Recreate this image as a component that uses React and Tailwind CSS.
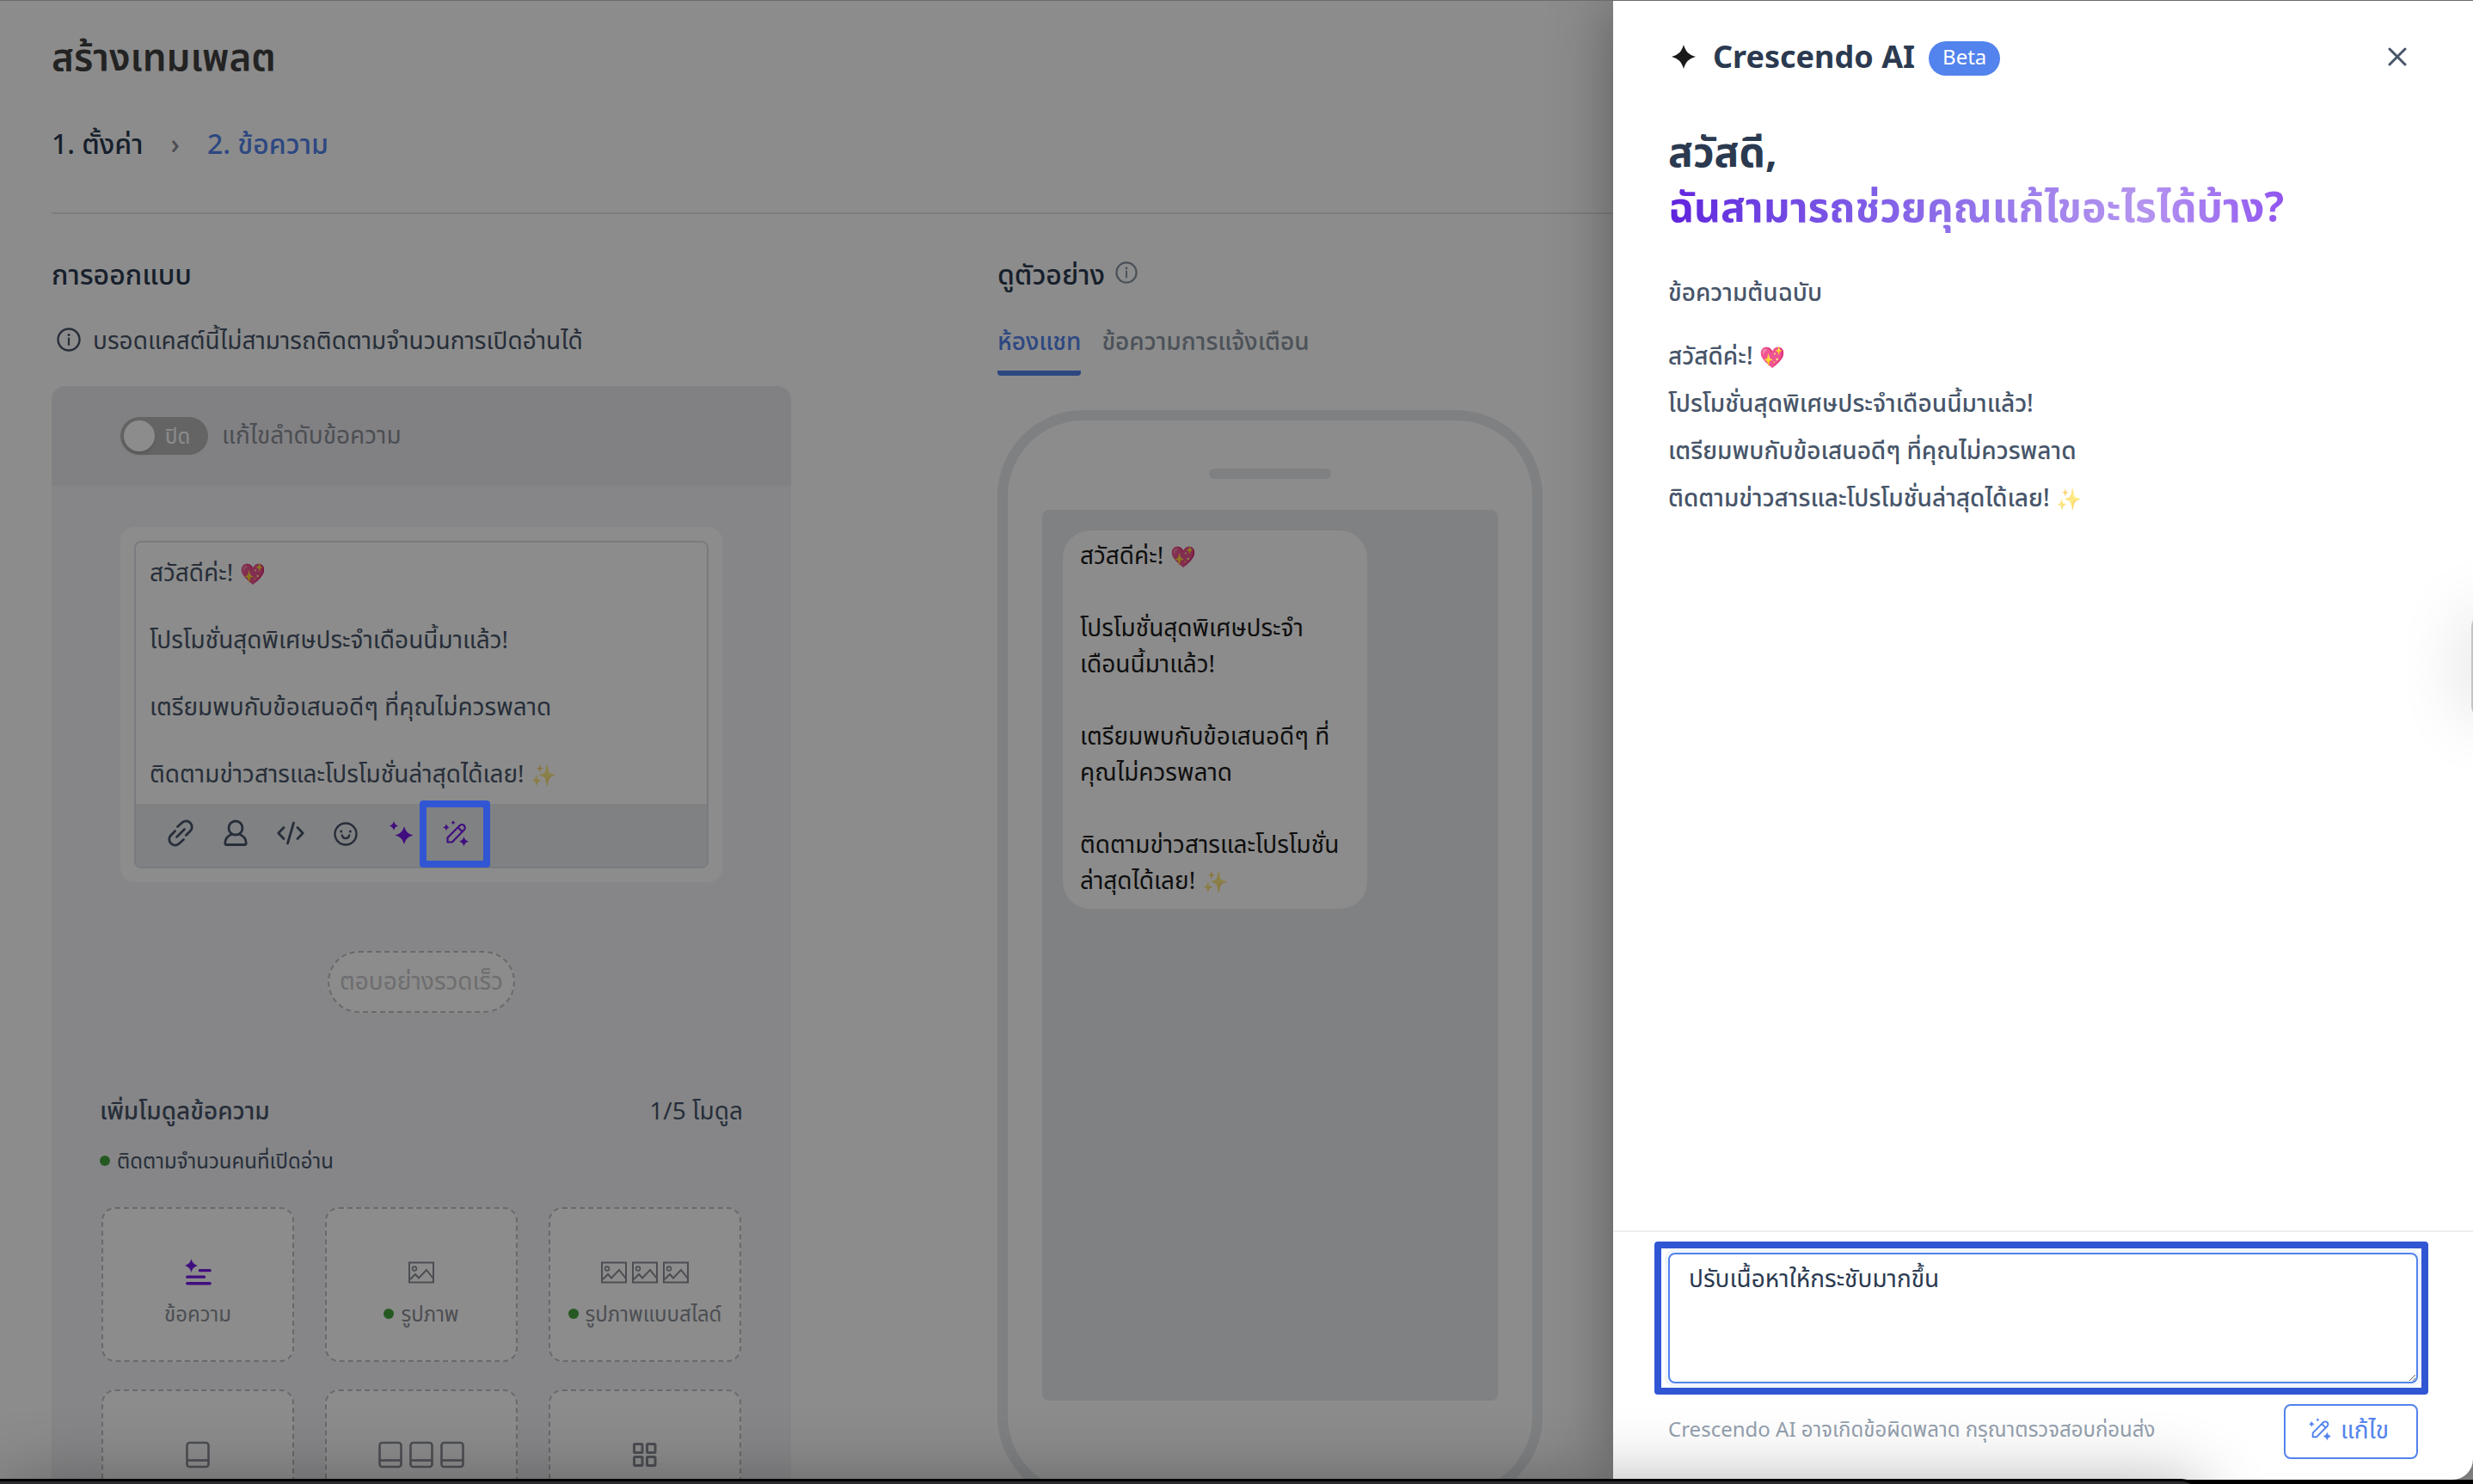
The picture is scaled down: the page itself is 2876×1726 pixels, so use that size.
import { X } from "lucide-react";

const paragraphs = [
  { text: "สวัสดีค่ะ!", emoji: "💖" },
  { text: "โปรโมชั่นสุดพิเศษประจำเดือนนี้มาแล้ว!" },
  { text: "เตรียมพบกับข้อเสนอดีๆ ที่คุณไม่ควรพลาด" },
  { text: "ติดตามข่าวสารและโปรโมชั่นล่าสุดได้เลย!", emoji: "✨", faded: true },
];

function Paragraph({ item, className }) {
  return (
    <p className={className}>
      {item.text}
      {item.emoji && (
        <>
          {" "}
          <span className={item.faded ? "text-2xl leading-none opacity-60" : "text-2xl leading-none"}>
            {item.emoji}
          </span>
        </>
      )}
    </p>
  );
}

function InfoIcon({ className }) {
  return (
    <svg viewBox="0 0 28 28" fill="none" stroke="currentColor" className={className}>
      <circle cx="14" cy="14" r="12.5" strokeWidth="2.4" />
      <path d="M14 12.5v7.5" strokeWidth="2.2" strokeLinecap="round" />
      <circle cx="14" cy="8.6" r="1.5" fill="currentColor" stroke="none" />
    </svg>
  );
}

function LinkIcon() {
  return (
    <svg viewBox="0 0 32 32" fill="none" stroke="currentColor" strokeWidth="2.8" strokeLinecap="round" className="size-8">
      <path d="M12.5 8.5 17.5 4a6.8 6.8 0 0 1 9.8 9.6l-5 5M19.5 23.5 14.5 28a6.8 6.8 0 0 1-9.8-9.6l5-5M11.5 20.5l9-9" />
    </svg>
  );
}

function PersonIcon() {
  return (
    <svg viewBox="0 0 32 32" fill="none" stroke="currentColor" strokeWidth="2.8" strokeLinejoin="round" className="size-8">
      <circle cx="16" cy="10" r="8" />
      <path d="M11.5 17.5c-4.5 1.5-7.5 5.2-7.7 10.3 0 1 .6 1.7 1.6 1.7h21.2c1 0 1.6-.7 1.6-1.7-.2-5.1-3.2-8.8-7.7-10.3" />
    </svg>
  );
}

function CodeIcon() {
  return (
    <svg viewBox="0 0 32 32" fill="none" stroke="currentColor" strokeWidth="2.8" strokeLinecap="round" strokeLinejoin="round" className="size-8">
      <path d="M8 9.5 1.8 16 8 22.5M24 9.5l6.2 6.5-6.2 6.5M19.5 4l-7 24" />
    </svg>
  );
}

function SmileIcon() {
  return (
    <svg viewBox="0 0 32 32" fill="none" stroke="currentColor" strokeWidth="2.4" strokeLinecap="round" className="size-8">
      <circle cx="16" cy="17" r="12.5" />
      <path d="M11.8 18.5c.6 2.5 2.2 3.6 4.2 3.6s3.6-1.1 4.2-3.6" />
      <circle cx="10.7" cy="14" r="1.5" fill="currentColor" stroke="none" />
      <circle cx="21.3" cy="14" r="1.5" fill="currentColor" stroke="none" />
    </svg>
  );
}

function SparkleIcon() {
  return (
    <svg viewBox="0 0 32 32" fill="currentColor" className="size-8">
      <path d="M20 8c1.8 6 4.3 8.6 10.5 10.5C24.3 20.4 21.8 23 20 29c-1.8-6-4.3-8.6-10.5-10.5C15.7 16.6 18.2 14 20 8Z" />
      <path d="M8 2c.8 3.2 2 4.6 5.2 5.5C10 8.4 8.8 9.8 8 13c-.8-3.2-2-4.6-5.2-5.5C6 6.6 7.2 5.2 8 2Z" />
    </svg>
  );
}

function MagicPenIcon({ className }) {
  return (
    <svg viewBox="0 0 32 32" fill="currentColor" className={className}>
      <path
        d="M6.5 26.5v-5.2L20.5 7.2a3.6 3.6 0 0 1 5.2 5.1L11.8 26.5ZM18.5 9.2l5.2 5.2"
        fill="none"
        stroke="currentColor"
        strokeWidth="2.2"
        strokeLinejoin="round"
      />
      <path d="M25.5 20c1 3.4 2.2 4.6 5.5 5.7-3.3 1-4.5 2.3-5.5 5.7-1-3.4-2.2-4.7-5.5-5.7 3.3-1.1 4.5-2.3 5.5-5.7Z" />
      <path d="M5 5.3c.7 2.4 1.6 3.3 4 4-2.4.7-3.3 1.6-4 4-.7-2.4-1.6-3.3-4-4 2.4-.7 3.3-1.6 4-4Z" />
      <path d="M13 1c.5 1.7 1.1 2.3 2.7 2.8-1.6.5-2.2 1.1-2.7 2.8-.5-1.7-1.1-2.3-2.7-2.8 1.6-.5 2.2-1.1 2.7-2.8Z" />
    </svg>
  );
}

function TextModuleIcon() {
  return (
    <svg viewBox="0 0 34 34" className="size-8 text-[#7519e6]" fill="currentColor">
      <path d="M9 0c1.4 5 3.3 7 8.2 8.5C12.3 10 10.4 12 9 17c-1.4-5-3.3-7-8.2-8.5C5.7 7 7.6 5 9 0Z" />
      <path d="M19.5 14.5H32M4 22.5h21M4 30.5h28" stroke="currentColor" strokeWidth="3.6" strokeLinecap="round" />
    </svg>
  );
}

function ImageIcon() {
  return (
    <svg viewBox="0 0 30 26" fill="none" stroke="currentColor" strokeWidth="2" className="h-[26px] w-[30px]">
      <rect x="1" y="1.5" width="28" height="23" />
      <circle cx="7" cy="8.5" r="2.4" strokeWidth="1.6" />
      <path d="m2 21 6-6 4 4.5 9-9.5 7.5 9.5" />
    </svg>
  );
}

function CardIcon() {
  return (
    <svg viewBox="0 0 28 32" fill="none" stroke="currentColor" strokeWidth="2.6" className="h-8 w-7">
      <rect x="1.5" y="2" width="25" height="28" rx="3" />
      <path d="M1.5 22.5h25" />
    </svg>
  );
}

function GridIcon() {
  return (
    <svg viewBox="0 0 30 30" fill="none" stroke="currentColor" strokeWidth="3" className="size-[30px]">
      <rect x="2.5" y="2.5" width="9.5" height="10" rx="1" />
      <rect x="17.5" y="2.5" width="9.5" height="10" rx="1" />
      <rect x="2.5" y="17.5" width="9.5" height="10" rx="1" />
      <rect x="17.5" y="17.5" width="9.5" height="10" rx="1" />
    </svg>
  );
}

const modules = [
  { name: "ข้อความ", icons: [TextModuleIcon], tracked: false },
  { name: "รูปภาพ", icons: [ImageIcon], tracked: true },
  { name: "รูปภาพแบบสไลด์", icons: [ImageIcon, ImageIcon, ImageIcon], tracked: true },
  { name: "การ์ด", icons: [CardIcon], tracked: false },
  { name: "การ์ดแบบสไลด์", icons: [CardIcon, CardIcon, CardIcon], tracked: false },
  { name: "ริชเมสเสจ", icons: [GridIcon], tracked: false },
];

const tools = [
  { label: "Link", Icon: LinkIcon },
  { label: "Name", Icon: PersonIcon },
  { label: "Code", Icon: CodeIcon },
  { label: "Emoji", Icon: SmileIcon },
];

function Dot() {
  return <span className="size-3 shrink-0 rounded-full bg-[#46a33e]" />;
}

function Editor() {
  return (
    <div className="mx-20 mt-12 rounded-2xl bg-white p-4">
      <div className="rounded-lg border-2 border-[#dce1e8]">
        <div className="px-4 pt-[15px] text-[28px] leading-[39px] text-[#475569]">
          {paragraphs.map((item, i) => (
            <Paragraph key={item.text} item={item} className={i < 3 ? "mb-[39px]" : "mb-4"} />
          ))}
        </div>
        <div className="flex h-[73px] items-center gap-8 rounded-b-md bg-[#e9ebee] px-9 pb-[6px] text-[#475569]">
          {tools.map(({ label, Icon }) => (
            <button key={label} type="button" aria-label={label}>
              <Icon />
            </button>
          ))}
          <button type="button" aria-label="AI" className="text-[#7519e6]">
            <SparkleIcon />
          </button>
          <button type="button" aria-label="AI edit" className="relative text-[#7519e6]">
            <MagicPenIcon className="size-8" />
            <span className="absolute -top-[22px] -right-6 -bottom-6 -left-[26px] z-20 rounded border-8 border-[#3156d3]" />
          </button>
        </div>
      </div>
    </div>
  );
}

function DesignPanel() {
  return (
    <section className="w-[860px] shrink-0">
      <h2 className="text-[32px] leading-[48px] font-medium text-[#2b3a50]">การออกแบบ</h2>
      <p className="mt-7 flex h-12 items-center gap-[14px] pl-[6px] text-[28px] leading-[42px] text-[#475569]">
        <InfoIcon className="size-7" />
        บรอดแคสต์นี้ไม่สามารถติดตามจำนวนการเปิดอ่านได้
      </p>

      <div className="mt-[30px] rounded-t-2xl bg-[#f4f4f8]">
        <div className="flex h-[116px] items-center gap-4 rounded-t-2xl bg-[#ebecf0] px-20 text-[28px] text-[#8b8f97]">
          <button
            type="button"
            role="switch"
            aria-checked="false"
            aria-labelledby="order-label"
            className="flex h-11 w-[102px] items-center gap-3 rounded-full bg-[#b6b6b6] p-1 text-2xl text-white"
          >
            <span className="size-9 rounded-full bg-white shadow-md" />
            ปิด
          </button>
          <span id="order-label" className="pb-1">แก้ไขลำดับข้อความ</span>
        </div>

        <Editor />

        <button
          type="button"
          className="mx-auto mt-20 block h-[72px] rounded-full border-2 border-dashed border-[#c0c0c4] bg-white px-3 pb-1 text-[28px] text-[#c8c8cc]"
        >
          ตอบอย่างรวดเร็ว
        </button>

        <div className="mt-[92px] px-14 text-[#475569]">
          <div className="flex items-center justify-between text-[28px] leading-[42px]">
            <h3 className="font-medium">เพิ่มโมดูลข้อความ</h3>
            <span>1/5 โมดูล</span>
          </div>
          <p className="mt-5 flex items-center gap-2 text-2xl leading-9">
            <Dot />
            ติดตามจำนวนคนที่เปิดอ่าน
          </p>
          <div className="mt-9 grid grid-cols-3 gap-x-9 gap-y-8 px-[2px]">
            {modules.map(({ name, icons, tracked }) => (
              <button
                key={name}
                type="button"
                className="flex h-[180px] flex-col items-center rounded-2xl border-2 border-dashed border-[#c0c0c4] bg-white pt-[58px] text-2xl leading-9 text-[#8b8f97]"
              >
                <span className="flex h-8 items-center">
                  {icons.map((Icon, i) => (
                    <span key={i} className="flex w-9 justify-center">
                      <Icon />
                    </span>
                  ))}
                </span>
                <span className="mt-[14px] flex items-center gap-2">
                  {tracked && <Dot />}
                  {name}
                </span>
              </button>
            ))}
          </div>
        </div>
      </div>
    </section>
  );
}

function Preview() {
  return (
    <section className="w-[634px] shrink-0">
      <h2 className="flex items-center gap-3 text-[32px] leading-[48px] font-medium text-[#2b3a50]">
        ดูตัวอย่าง
        <span className="pb-1">
          <InfoIcon className="size-[26px] text-[#8b95a3]" />
        </span>
      </h2>
      <div className="mt-7 flex gap-6 text-[28px] font-medium">
        <button type="button" className="h-[66px] rounded-b-sm border-b-[6px] border-[#5383ec] pb-[10px] text-[#5383ec]">
          ห้องแชท
        </button>
        <button type="button" className="h-[66px] border-b-[6px] border-transparent pb-[10px] text-[#8b95a3]">
          ข้อความการแจ้งเตือน
        </button>
      </div>
      <div className="mt-10 rounded-[100px] border-[12px] border-[#e6e9ed] px-10 pt-14 pb-[106px]">
        <div className="mx-auto h-3 w-[142px] rounded-full bg-[#e6e9ed]" />
        <div className="mt-9 h-[1036px] rounded-lg bg-[#e9ebee] p-6">
          <div className="w-[354px] rounded-[32px] bg-white px-5 pt-[7px] pb-[13px] text-[28px] leading-[42px] text-[#1a1a1a]">
            {paragraphs.map((item, i) => (
              <Paragraph key={item.text} item={item} className={i < 3 ? "mb-[42px]" : ""} />
            ))}
          </div>
        </div>
      </div>
    </section>
  );
}

function Drawer() {
  return (
    <aside className="absolute inset-y-0 right-0 z-10 flex w-[1000px] flex-col overflow-hidden rounded-br-3xl bg-white text-[#475569] shadow-[0_0_72px_rgba(0,0,0,0.35)]">
      <header className="flex items-center px-16 pt-[38px]">
        <svg viewBox="0 0 28 28" className="mx-1 size-7" fill="#1a1a1a">
          <path d="M14 0c2.6 8.3 5.7 11.4 14 14-8.3 2.6-11.4 5.7-14 14-2.6-8.3-5.7-11.4-14-14C8.3 11.4 11.4 8.3 14 0Z" />
        </svg>
        <h2 className="ml-4 text-[36px] leading-[54px] font-bold text-[#2b3a50]">Crescendo AI</h2>
        <span className="mt-1 ml-4 h-10 rounded-full bg-[#5383ec] px-4 text-2xl leading-9 text-white">Beta</span>
        <button type="button" aria-label="Close" className="ml-auto px-[6px]">
          <X className="size-9" strokeWidth={2} />
        </button>
      </header>

      <div className="flex-1 px-16 pt-[51px]">
        <h1 className="text-[48px] leading-[64px] font-bold text-[#2b3a50]">
          สวัสดี,
          <br />
          <span className="inline-block bg-linear-to-r from-[#6021dd] via-[#b595ef] via-77% to-[#9254f0] bg-clip-text text-transparent">
            ฉันสามารถช่วยคุณแก้ไขอะไรได้บ้าง?
          </span>
        </h1>
        <h3 className="mt-[46px] text-[28px] leading-[42px] font-medium">ข้อความต้นฉบับ</h3>
        <div className="mt-[26px] text-[28px] leading-[55px] font-medium">
          {paragraphs.map((item) => (
            <Paragraph key={item.text} item={item} />
          ))}
        </div>
      </div>

      <footer className="border-t-2 border-[#eeeeee] px-16 pt-6 pb-6">
        <div className="relative">
          <textarea
            aria-label="Prompt"
            defaultValue="ปรับเนื้อหาให้กระชับมากขึ้น"
            className="block h-[152px] w-full rounded-lg border-2 border-[#5383ec] bg-white px-[22px] py-[6px] text-[28px] leading-[42px] text-[#2b3a50] shadow-[0_0_0_4px_#f0f5fd] outline-none"
          />
          <span className="pointer-events-none absolute -inset-y-[13px] -right-3 -left-4 rounded border-8 border-[#3156d3]" />
        </div>
        <div className="mt-6 flex items-center justify-between">
          <p className="pb-[6px] text-2xl leading-9 text-[#94a0ae]">Crescendo AI อาจเกิดข้อผิดพลาด กรุณาตรวจสอบก่อนส่ง</p>
          <button
            type="button"
            className="flex h-16 w-[156px] items-center justify-center gap-[10px] rounded-lg border-2 border-[#5383ec] bg-white pr-[6px] pb-[6px] text-[28px] text-[#5383ec]"
          >
            <MagicPenIcon className="size-7" />
            แก้ไข
          </button>
        </div>
      </footer>
    </aside>
  );
}

export default function App() {
  return (
    <div className="relative flex h-screen flex-col overflow-hidden border-t border-[#6b6b6b] bg-black font-['Noto_Sans','Noto_Sans_Thai',sans-serif]">
      <div className="relative min-h-0 flex-1 overflow-hidden">
        <main className="h-full overflow-hidden bg-white px-[60px] pt-[34px]">
          <h1 className="text-[44px] leading-[60px] font-semibold text-[#404040]">สร้างเทมเพลต</h1>
          <nav className="mt-12 flex items-center gap-8 text-[32px] leading-[48px] font-medium">
            <a href="#setup" className="text-[#2b3a50]">1. ตั้งค่า</a>
            <span className="text-[#8b8f97]">›</span>
            <a href="#message" className="text-[#5383ec]">2. ข้อความ</a>
          </nav>
          <hr className="mt-14 border-t-2 border-[#e0e3e8]" />
          <div className="mt-[46px] flex gap-60">
            <DesignPanel />
            <Preview />
          </div>
        </main>
        <div className="absolute inset-0 bg-black/45" />
        <Drawer />
        {/* side handle resting just past the window edge */}
        <div className="absolute top-[712px] -right-[38px] z-20 h-[124px] w-10 rounded-2xl bg-[#c4c4c4] shadow-[0_0_80px_rgba(0,0,0,0.18)]" />
      </div>
      {/* dock */}
      <div className="h-[5px] shrink-0" />
      <div className="absolute -bottom-80 left-0 z-30 h-[323px] w-[89%] rounded-tr-3xl bg-[#2c2c2f] shadow-[0_0_0_3px_#000,0_0_80px_rgba(0,0,0,0.3)]" />
    </div>
  );
}
